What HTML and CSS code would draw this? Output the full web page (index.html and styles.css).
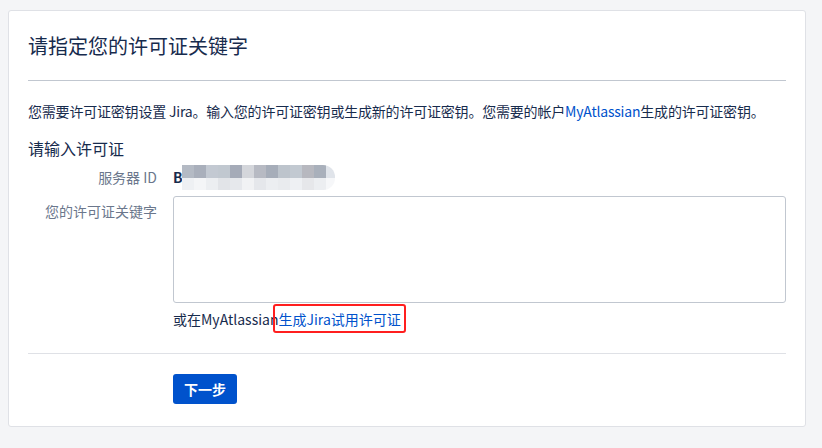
FILE: index.html
```html
<!DOCTYPE html>
<html lang="zh-CN">
<head>
<meta charset="utf-8">
<title>请指定您的许可证关键字</title>
<link rel="stylesheet" href="styles.css">
</head>
<body>
<div class="card">
  <h1 class="title">请指定您的许可证关键字</h1>
  <div class="rule"></div>
  <p class="intro">您需要许可证密钥设置 Jira。输入您的许可证密钥或生成新的许可证密钥。您需要的帐户<a class="link" href="#">MyAtlassian</a>生成的许可证密钥。</p>
  <h2 class="subtitle">请输入许可证</h2>
  <div class="form">
    <div class="label label-inline">服务器 ID</div>
    <div class="value"><span class="server-id">B</span><span class="mosaic"></span></div>
    <div class="label label-top">您的许可证关键字</div>
    <div class="field">
      <textarea class="textarea"></textarea>
      <div class="help">或在MyAtlassian<a class="link marked" href="#">生成Jira试用许可证</a></div>
    </div>
  </div>
  <div class="rule rule-light"></div>
  <div class="actions">
    <button class="button" type="button">下一步</button>
  </div>
</div>
</body>
</html>
```
FILE: styles.css
```css
html, body {
  margin: 0;
  padding: 0;
  background: #f4f5f7;
}
body {
  font-family: "Noto Sans CJK SC", "Noto Sans", "Liberation Sans", sans-serif;
  color: #172b4d;
  font-size: 14px;
  padding: 10px 16px 20px 8px;
}
.card {
  background: #ffffff;
  border: 1px solid #dfe1e6;
  border-radius: 3px;
  padding: 21px 19px 24px 19px;
  height: 417px;
  box-sizing: border-box;
}
.title {
  margin: 0;
  font-size: 20px;
  font-weight: normal;
  line-height: 28px;
  color: #172b4d;
}
.rule {
  height: 1px;
  background: #c1c7d0;
  margin-top: 20px;
}
.rule-light {
  background: #dfe1e6;
  margin-top: 24px;
}
.intro {
  margin: 20px 0 0 0;
  line-height: 20px;
  font-size: 14px;
  letter-spacing: -0.2px;
}
.link {
  color: #0052cc;
  text-decoration: none;
}
.subtitle {
  margin: 15px 0 0 0;
  font-size: 16px;
  font-weight: normal;
  line-height: 24px;
}
.form {
  display: grid;
  grid-template-columns: 129px 1fr;
  column-gap: 16px;
  row-gap: 9px;
  margin-top: 7px;
}
.label {
  text-align: right;
  color: #6b778c;
  line-height: 20px;
}
.label-top {
  padding-top: 5px;
}
.value {
  display: flex;
  align-items: center;
  height: 20px;
}
.server-id {
  font-weight: bold;
  color: #172b4d;
  line-height: 20px;
}
.mosaic {
  display: block;
  width: 153px;
  height: 25px;
  margin-left: -1px;
  border-radius: 0 12px 12px 0;
  background:
    linear-gradient(90deg,
      #b4bac4 0 12px, #a9afbb 12px 24px, #c3c9d2 24px 36px, #c1c8d0 36px 48px,
      #a5abb8 48px 60px, #d4d6db 60px 72px, #b7bac3 72px 84px, #a6adb9 84px 96px,
      #bdc4cc 96px 108px, #c2c9d1 108px 120px, #b7b8bf 120px 132px, #a9b0bb 132px 144px,
      #e0e4ea 144px 153px) top / 100% 52% no-repeat,
    linear-gradient(90deg,
      #eef0f3 0 12px, #f4f5f7 12px 24px, #eceef1 24px 36px, #e2e4e8 36px 48px,
      #e6e8ec 48px 60px, #f1f2f4 60px 72px, #e5e7eb 72px 84px, #eceef1 84px 96px,
      #e9ebee 96px 108px, #eef0f3 108px 120px, #e6e7ea 120px 132px, #eceef1 132px 144px,
      #f6f7f9 144px 153px) bottom / 100% 48% no-repeat;
}
.field {
  display: flex;
  flex-direction: column;
}
.textarea {
  display: block;
  box-sizing: border-box;
  width: 613px;
  height: 107px;
  border: 1px solid #c1c7d0;
  border-radius: 3px;
  resize: none;
  margin: 0;
  background: #ffffff;
}
.help {
  margin-top: 6px;
  line-height: 20px;
  color: #172b4d;
}
.marked {
  position: relative;
}
.marked::after {
  content: "";
  position: absolute;
  left: -5px;
  right: -5px;
  top: -5px;
  bottom: -4px;
  border: 2px solid #ff1f1f;
  border-radius: 3px;
}
.actions {
  margin-top: 20px;
  padding-left: 145px;
}
.button {
  height: 30px;
  padding: 0 11px;
  background: #0052cc;
  color: #ffffff;
  border: none;
  border-radius: 3px;
  font-family: "Noto Sans CJK SC", "Noto Sans", sans-serif;
  font-size: 14px;
  font-weight: bold;
  line-height: 30px;
}
```
